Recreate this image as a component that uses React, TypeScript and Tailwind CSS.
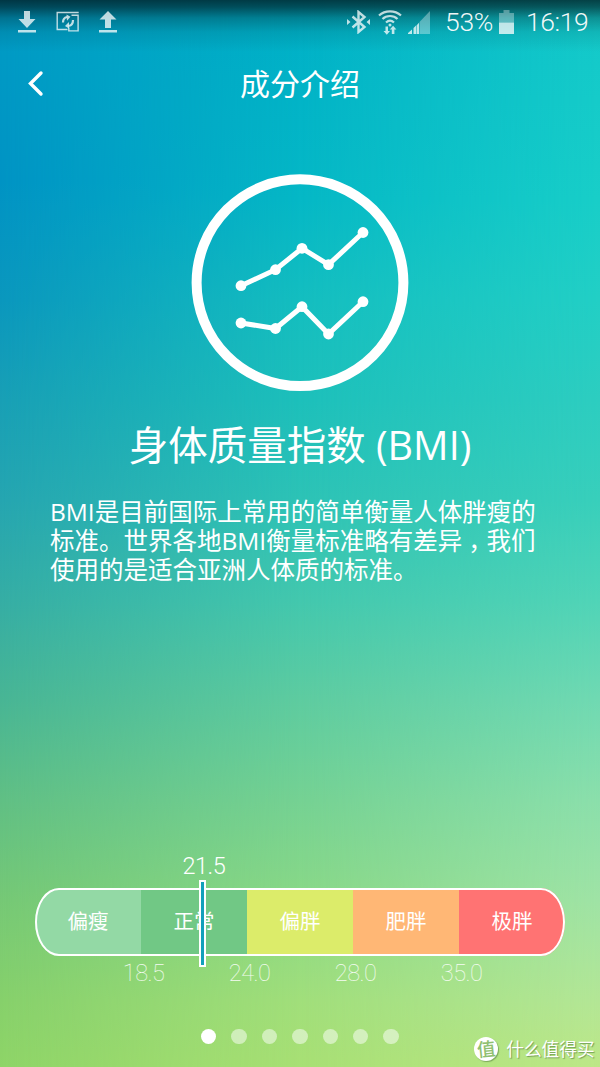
import React from "react";

const segments = [
  { label: "偏瘦", color: "bg-[#93d9a5]", limit: "18.5" },
  { label: "正常", color: "bg-[#71c885]", limit: "24.0" },
  { label: "偏胖", color: "bg-[#dcec6a]", limit: "28.0" },
  { label: "肥胖", color: "bg-[#ffb775]", limit: "35.0" },
  { label: "极胖", color: "bg-[#ff7373]", limit: "" },
];

const upperLine: [number, number][] = [
  [61, 125.7],
  [95.5, 109.7],
  [122, 88.3],
  [148.5, 104.7],
  [183, 72.5],
];

const lowerLine: [number, number][] = [
  [61, 163],
  [95.5, 168.5],
  [122, 146.7],
  [148.5, 174],
  [183, 141.7],
];

const Backdrop = () => (
  <div className="absolute inset-0 -z-10 bg-[linear-gradient(to_bottom,#00b0c8_0px,#05b8c6_200px,#14bec0_300px,#1dc0bb_400px,#2dc3b6_500px,#43c8ae_600px,#5ecca0_700px,#75d293_800px,#8ad987_900px,#a1df7b_1000px,#a8e074_1067px)]">
    <div className="absolute inset-0 bg-[linear-gradient(to_bottom,#009cc4_0px,#0093c4_180px,#0a97bd_300px,#189fb5_400px,#25a5b0_500px,#35ada4_600px,#48b594_700px,#60bf84_800px,#75c875_900px,#86d06b_1000px,#8ed467_1067px)] [mask-image:linear-gradient(to_right,black,transparent_50%)]" />
    <div className="absolute inset-0 bg-[linear-gradient(to_bottom,#12c8ca_0px,#18cec8_200px,#22cfc5_300px,#2dcdc0_400px,#38cfbb_500px,#50d4b7_600px,#70d9b2_700px,#8bdfab_800px,#9fe3a5_900px,#b3e696_1000px,#bde787_1067px)] [mask-image:linear-gradient(to_left,black,transparent_50%)]" />
    <div className="absolute inset-x-0 top-0 h-[52px] bg-[linear-gradient(to_bottom,rgba(0,20,25,0.75)_0px,rgba(0,20,25,0.62)_7px,rgba(0,20,25,0.3)_18px,rgba(0,20,25,0.1)_32px,transparent)]" />
  </div>
);

const StatusBar = () => (
  <div className="flex h-11 items-center justify-between pl-[18px] pr-[11px] text-white/75">
    <div className="flex items-center gap-5">
      <svg width="18" height="22" viewBox="0 0 18 22" fill="currentColor">
        <path d="M6 0h6v8h5.500L9 17 .5 8H6zM0 19h18v2.500H0z" />
      </svg>
      <svg
        width="23"
        height="22"
        viewBox="0 0 23 22"
        fill="none"
        stroke="currentColor"
        strokeWidth="1.400"
      >
        <path d="M11.500 18.500H1.200V1.500H22.700M15.500 4.300h6.600v15.600h-9.300v-3.500" />
        <path d="M7 11.500c0-3.500 1.500-5 4-5.500M17 9c0 3.500-1.500 5.500-4.500 6" strokeWidth="2.200" />
        <path d="M10.500 3.500l4 2.300-3.500 4zM13 17.500l-4-2.500 4-4z" fill="currentColor" stroke="none" />
      </svg>
      <svg width="18" height="22" viewBox="0 0 18 22" fill="currentColor">
        <path d="M9 0l8.500 8.500H12V17H6V8.500H.5zM0 19h18v2.500H0z" />
      </svg>
    </div>

    <div className="flex items-center">
      <svg width="23" height="24" viewBox="0 0 23 24" fill="none" stroke="currentColor" strokeWidth="2.400">
        <path d="M5.500 6.500l12 10.500-6 5V2l6 5L5.500 17.500" />
        <path d="M0 9l3.500 3L0 15zM23 9l-3.500 3L23 15z" fill="currentColor" stroke="none" />
      </svg>
      <svg
        className="ml-2"
        width="24"
        height="25"
        viewBox="0 0 24 25"
        fill="none"
        stroke="currentColor"
        strokeWidth="2.200"
      >
        <path d="M1 5.500c6-5.500 16-5.500 22 0M4.500 9c4-4 11-4 15 0M8 12.500c2.500-2.300 5.500-2.300 8 0" />
        <circle cx="12" cy="15" r="1.500" fill="currentColor" stroke="none" />
        <path
          d="M7.500 16.500h2.500V21h2l-3.200 3.700L5.500 21h2zM13.800 24v-4.500h-2l3.300-3.700 3.300 3.700h-2V24z"
          fill="currentColor"
          stroke="none"
        />
      </svg>
      <svg className="ml-1.5" width="22" height="23" viewBox="0 0 22 23" fill="currentColor">
        <path d="M11.500 11L22 0v23H11.500z" opacity=".45" />
        <path d="M0 23v-1l4-3.500V23zM5.500 23v-6L8 14.500V23zM8.500 23v-8.500l2.500-2.800V23z" />
      </svg>
      <span className="ml-[15px] w-[53px] whitespace-nowrap font-['Roboto',sans-serif] text-[26.5px] font-light leading-none tracking-[-0.3px] text-white/95">
        53%
      </span>
      <svg className="ml-px" width="15" height="24" viewBox="0 0 15 24" fill="currentColor">
        <path d="M4.500 0h6v3H15v9.500H0V3h4.500z" opacity=".45" />
        <path d="M0 12.500h15V24H0z" />
      </svg>
      <span className="ml-3 w-[63px] whitespace-nowrap font-['Roboto',sans-serif] text-[26.5px] font-light leading-none tracking-[-0.4px] text-white/95">
        16:19
      </span>
    </div>
  </div>
);

const ChartLine = ({ points }: { points: [number, number][] }) => (
  <g>
    <polyline points={points.join(" ")} fill="none" stroke="white" strokeWidth="5" />
    {points.map(([x, y]) => (
      <circle key={x} cx={x} cy={y} r="5.4" fill="white" />
    ))}
  </g>
);

const BmiScale = () => (
  <div className="mx-[35px] text-white">
    <div className="relative h-[68px]">
      <div className="flex h-full overflow-hidden rounded-[24px/34px]">
        {segments.map((item) => (
          <div
            key={item.label}
            className={`flex flex-1 items-center justify-center pb-0.5 text-[20.5px] ${item.color}`}
          >
            {item.label}
          </div>
        ))}
      </div>
      <div className="absolute inset-0 rounded-[24px/34px] border-2 border-white" />
      <span className="absolute -top-9 left-[147.5px] font-['Roboto',sans-serif] text-[23.5px] font-light leading-7 tracking-[-0.5px]">
        21.5
      </span>
      <div className="absolute -top-2 left-[164px] h-[87px] w-[7px] border-2 border-white bg-[#12a0bb]" />
    </div>
    <div className="flex pt-[3px] font-['Roboto',sans-serif] text-[23.5px] font-thin leading-7 tracking-[-0.5px] text-white/90">
      {segments.map((item) => (
        <span key={item.label} className="flex flex-1 justify-end">
          <span className="-mr-[23.5px]">{item.limit}</span>
        </span>
      ))}
    </div>
  </div>
);

const App = () => {
  return (
    <div className="relative isolate flex h-[1067px] w-[600px] flex-col overflow-hidden font-['Open_Sans','Noto_Sans_CJK_SC',sans-serif] text-white">
      <Backdrop />
      <StatusBar />

      <header className="flex h-20 items-center px-[27px]">
        <button className="w-10 pb-0.5" aria-label="返回">
          <svg
            width="17"
            height="27"
            viewBox="0 0 17 27"
            fill="none"
            stroke="white"
            strokeWidth="3.4"
            strokeLinecap="round"
          >
            <path d="M14 3L3.500 13.500 14 24" />
          </svg>
        </button>
        <h1 className="flex-1 pr-10 text-center text-[30px] leading-10">成分介绍</h1>
      </header>

      <main className="flex flex-1 flex-col">
        <svg className="mx-auto mt-9 shrink-0" width="240" height="240" viewBox="0 0 240 240">
          <circle cx="120" cy="122.700" r="103.400" fill="none" stroke="white" strokeWidth="10" />
          <ChartLine points={upperLine} />
          <ChartLine points={lowerLine} />
        </svg>

        <h2 className="mt-4 text-center text-[39.5px] leading-[58px]">身体质量指数 (BMI)</h2>

        <p className="ml-[50px] mt-[23px] whitespace-nowrap text-[24.5px] leading-[29px]">
          BMI是目前国际上常用的简单衡量人体胖瘦的
          <br />
          标准。世界各地BMI衡量标准略有差异
          <span className="mx-1.5 [font-feature-settings:'halt']">，</span>我们
          <br />
          使用的是适合亚洲人体质的标准。
        </p>
      </main>

      <BmiScale />

      <footer className="flex h-[80px] shrink-0 items-start pl-[201px] pt-[42px]">
        <div className="flex gap-[15px]">
          {segments.concat(segments.slice(0, 2)).map((_, i) => (
            <span
              key={i}
              className={`size-[15.4px] rounded-full ${i === 0 ? "bg-white" : "bg-white/50"}`}
            />
          ))}
        </div>
        <div className="ml-[75.5px] mt-2 flex items-center gap-2 whitespace-nowrap">
          <span className="flex size-6 items-center justify-center rounded-full bg-white text-[#8fbf70] shadow-[1px_1px_1px_rgba(70,110,50,0.5)]">
            <span className="-rotate-6 text-[18.5px] font-medium leading-none">值</span>
          </span>
          <span className="text-[17.7px] leading-6 [text-shadow:1px_1px_1px_rgba(70,110,50,0.6)]">
            什么值得买
          </span>
        </div>
      </footer>
    </div>
  );
};

export default App;
